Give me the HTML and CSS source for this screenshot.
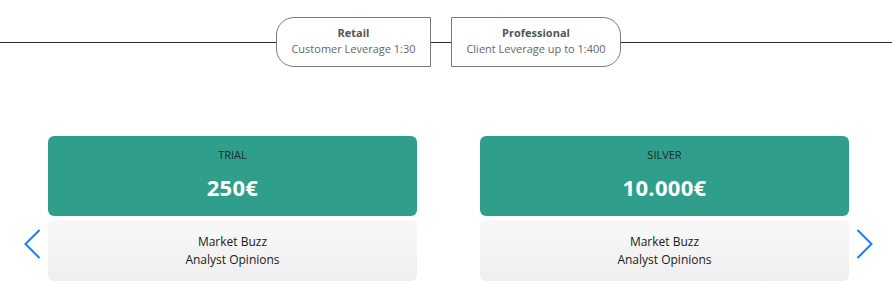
FILE: index.html
```html
<!DOCTYPE html>
<html lang="en">
<head>
<meta charset="utf-8">
<link rel="stylesheet" href="styles.css">
</head>
<body>
<div class="tiers">
  <div class="line line-left"></div>
  <div class="tier tier-retail">
    <div class="tier-name">Retail</div>
    <div class="tier-desc">Customer Leverage 1:30</div>
  </div>
  <div class="line line-mid"></div>
  <div class="tier tier-pro">
    <div class="tier-name">Professional</div>
    <div class="tier-desc">Client Leverage up to 1:400</div>
  </div>
  <div class="line line-right"></div>
</div>

<div class="slider">
  <button class="arrow arrow-prev" aria-label="Previous">
    <svg width="16" height="30" viewBox="0 0 16 30"><path d="M15.5 1 L1.5 15 L15.5 29" fill="none" stroke="#1a7df5" stroke-width="2"/></svg>
  </button>
  <div class="card">
    <div class="card-head">
      <div class="plan">TRIAL</div>
      <div class="price">250€</div>
    </div>
    <div class="card-body">
      <div>Market Buzz</div>
      <div>Analyst Opinions</div>
    </div>
  </div>
  <div class="card">
    <div class="card-head">
      <div class="plan">SILVER</div>
      <div class="price">10.000€</div>
    </div>
    <div class="card-body">
      <div>Market Buzz</div>
      <div>Analyst Opinions</div>
    </div>
  </div>
  <button class="arrow arrow-next" aria-label="Next">
    <svg width="16" height="30" viewBox="0 0 16 30"><path d="M0.5 1 L14.5 15 L0.5 29" fill="none" stroke="#1a7df5" stroke-width="2"/></svg>
  </button>
</div>
</body>
</html>
```
FILE: styles.css
```css
* { box-sizing: border-box; }
body {
  margin: 0;
  background: #fff;
  font-family: "Open Sans", "Lato", sans-serif;
  color: #222;
}
.tiers {
  display: flex;
  align-items: center;
  padding-top: 17px;
}
.line { height: 1px; background: #2a2a2a; }
.line-left { width: 276px; }
.line-mid { width: 20px; }
.line-right { flex: 1; }
.tier {
  height: 50px;
  border: 1px solid #7a7a7a;
  display: flex;
  flex-direction: column;
  justify-content: center;
  align-items: center;
  font-size: 11px;
  line-height: 16px;
  padding-bottom: 2px;
  color: #666;
}
.tier-retail { width: 155px; border-radius: 18px 0 0 18px; }
.tier-pro { width: 170px; border-radius: 0 18px 18px 0; }
.tier-name { font-weight: 700; color: #555; }

.slider {
  display: flex;
  align-items: flex-end;
  margin-top: 69px;
}
.arrow {
  background: none;
  border: 0;
  padding: 0;
  width: 16px;
  height: 30px;
  margin-bottom: 22px;
  display: block;
}
.arrow svg { display: block; }
.arrow-prev { margin-left: 24px; margin-right: 8px; }
.arrow-next { margin-left: 8px; }
.card { width: 369px; }
.card + .card { margin-left: 63px; }
.card-head {
  height: 80px;
  background: #2f9f8b;
  border-radius: 6px;
  text-align: center;
  padding-top: 11px;
}
.plan { font-size: 11px; line-height: 16px; color: #1e2a28; }
.price { font-size: 22px; line-height: 30px; font-weight: 700; color: #fff; margin-top: 9px; letter-spacing: 0.3px; }
.card-body {
  margin-top: 4px;
  height: 61px;
  border-radius: 6px;
  background: linear-gradient(#f8f8f8, #efefef);
  display: flex;
  flex-direction: column;
  justify-content: center;
  align-items: center;
  font-size: 12px;
  line-height: 18px;
  color: #1a1a1a;
}
```
